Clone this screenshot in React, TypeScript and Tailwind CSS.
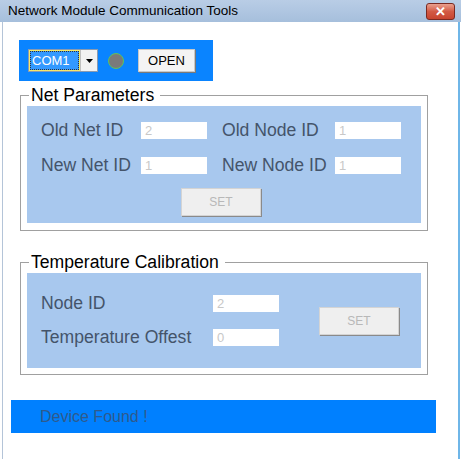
const font = { fontFamily: '"Liberation Sans", Arial, sans-serif' };

function Field({ value, w = 'w-[66px]' }: { value: string; w?: string }) {
  return (
    <div className={`${w} h-[17px] bg-white text-[13px] leading-[17px] pl-[4px] text-[#c8c8c8]`}>
      {value}
    </div>
  );
}

function SetButton({ className = '' }: { className?: string }) {
  return (
    <div
      className={`flex items-center justify-center bg-[#efefef] border border-[#d4d4d4] shadow-[1px_1px_0_#8a8a8a] text-[12px] text-[#b8b8b8] ${className}`}
    >
      SET
    </div>
  );
}

function Group({ title, children, className = '' }: { title: string; children: React.ReactNode; className?: string }) {
  return (
    <div className={`relative ml-[20px] w-[408px] border border-[#a0a0a0] px-[6px] pb-[6px] ${className}`}>
      <span className="absolute left-[8px] top-[-12px] bg-white pl-[2px] pr-[6px] text-[17.6px] leading-[22px] text-black">
        {title}
      </span>
      {children}
    </div>
  );
}

export default function App() {
  return (
    <div className="w-[461px] h-[459px] bg-white relative overflow-hidden" style={font}>
      {/* title bar */}
      <div className="h-[22px] bg-gradient-to-b from-[#b9cde6] to-[#a6bfdc] flex items-center pl-[8px] relative">
        <span className="text-[13.5px] text-black">Network Module Communication Tools</span>
        <div className="absolute right-[6px] top-[3px] w-[29px] h-[17px] rounded-[3px] border border-[#7a2a22] bg-gradient-to-b from-[#e9a08f] via-[#d25a45] to-[#c8442f] flex items-center justify-center">
          <span className="text-white font-bold text-[13px] leading-none">✕</span>
        </div>
      </div>
      <div className="absolute left-[2px] top-[22px] bottom-0 w-px bg-[#b4c4d8]" />
      <div className="absolute right-[1px] top-[22px] bottom-0 w-[2px] bg-[#6fb6e8]" />

      {/* COM panel */}
      <div className="mt-[18px] ml-[19px] w-[194px] h-[41px] bg-[#0a84ff] flex items-center pl-[9px]">
        <div className="flex h-[23px] w-[70px] border border-[#8a9ab0] bg-white">
          <div className="flex-1 m-[1px] border border-dotted border-[#333] bg-[#3399ff] outline outline-1 outline-[#f5e76a] text-white text-[13px] leading-[17px] pl-[1px]">
            COM1
          </div>
          <div className="w-[17px] border-l border-[#c0c0c0] bg-[#f2f2f2] flex items-center justify-center">
            <svg width="7" height="4" viewBox="0 0 7 4">
              <path d="M0 0h7L3.5 4z" fill="#000" />
            </svg>
          </div>
        </div>
        <div className="ml-[10px] w-[16px] h-[16px] rounded-full bg-[#7a7a7a] border border-[#5ec45e]" />
        <div className="ml-[14px] w-[57px] h-[23px] bg-[#f4f4f4] border border-[#c8c8c8] shadow-[1px_1px_0_#7a7a7a] flex items-center justify-center text-[13px] text-black">
          OPEN
        </div>
      </div>

      {/* Net Parameters */}
      <Group title="Net Parameters" className="mt-[14px] pt-[10px] h-[136px]">
        <div className="bg-[#a8c8ee] h-[117px] pt-[15px] text-[17.6px] text-[#44546a]">
          <div className="flex items-center h-[18px]">
            <span className="ml-[14px] w-[100px] whitespace-nowrap">Old Net ID</span>
            <Field value="2" />
            <span className="ml-[15px] w-[113px] whitespace-nowrap">Old Node ID</span>
            <Field value="1" />
          </div>
          <div className="flex items-center h-[18px] mt-[17px]">
            <span className="ml-[14px] w-[100px] whitespace-nowrap">New Net ID</span>
            <Field value="1" />
            <span className="ml-[15px] w-[113px] whitespace-nowrap">New Node ID</span>
            <Field value="1" />
          </div>
          <SetButton className="ml-[154px] mt-[14px] w-[80px] h-[28px]" />
        </div>
      </Group>

      {/* Temperature Calibration */}
      <Group title="Temperature Calibration" className="mt-[31px] pt-[10px] h-[113px]">
        <div className="bg-[#a8c8ee] h-[95px] flex items-center text-[17.6px] text-[#44546a]">
          <div className="flex flex-col gap-[16px]">
            <div className="flex items-center h-[18px]">
              <span className="ml-[14px] w-[172px] whitespace-nowrap">Node ID</span>
              <Field value="2" />
            </div>
            <div className="flex items-center h-[18px]">
              <span className="ml-[14px] w-[172px] whitespace-nowrap">Temperature Offest</span>
              <Field value="0" />
            </div>
          </div>
          <SetButton className="ml-[40px] w-[80px] h-[28px]" />
        </div>
      </Group>

      {/* status */}
      <div className="mt-[25px] ml-[11px] w-[425px] h-[33px] bg-[#0080ff] flex items-center pl-[29px] text-[16px] text-[#2f5a8c]">
        Device Found !
      </div>
    </div>
  );
}
